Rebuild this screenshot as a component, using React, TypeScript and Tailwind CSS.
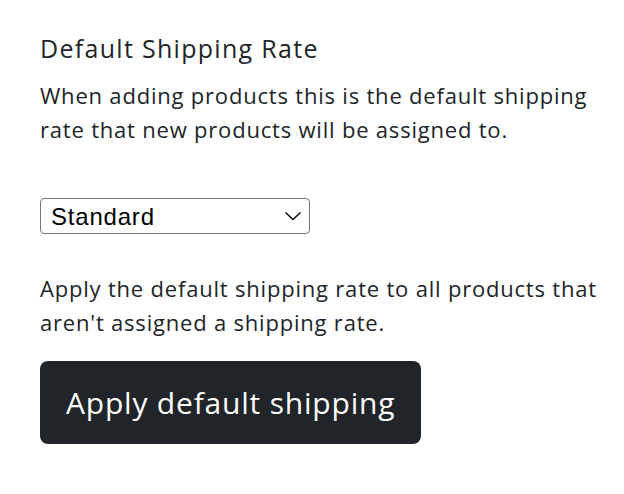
export default function App() {
  return (
    <div className="min-h-screen bg-white pl-10 pr-4 pt-[30px] font-['Open_Sans',sans-serif] text-[#212529]">
      <h2 className="text-[25px] leading-[36px] tracking-[1.3px] font-normal">Default Shipping Rate</h2>
      <p className="mt-[12px] text-[22px] leading-[34px] tracking-[0.8px]">
        When adding products this is the default shipping rate that new products will be assigned to.
      </p>
      <div className="mt-[52px] relative w-[270px]">
        <select
          defaultValue="standard"
          className="w-full h-[36px] appearance-none rounded-[4px] border border-[#767676] bg-white pl-[10px] pr-8 font-['Liberation_Sans',Arial,sans-serif] text-[24px] tracking-[0.8px] text-black outline-none"
        >
          <option value="standard">Standard</option>
          <option value="express">Express</option>
        </select>
        <svg
          className="pointer-events-none absolute right-[8px] top-1/2 -translate-y-1/2"
          width="18"
          height="10"
          viewBox="0 0 18 10"
          fill="none"
        >
          <path d="M1.5 1.5L9 8.5L16.5 1.5" stroke="#111" strokeWidth="1.6" />
        </svg>
      </div>
      <p className="mt-[37px] text-[22px] leading-[34px] tracking-[0.8px]">
        Apply the default shipping rate to all products that aren't assigned a shipping rate.
      </p>
      <button className="mt-[22px] h-[83px] rounded-[8px] bg-[#212529] px-[26px] text-[30px] tracking-[0.8px] text-white">
        Apply default shipping
      </button>
    </div>
  );
}
